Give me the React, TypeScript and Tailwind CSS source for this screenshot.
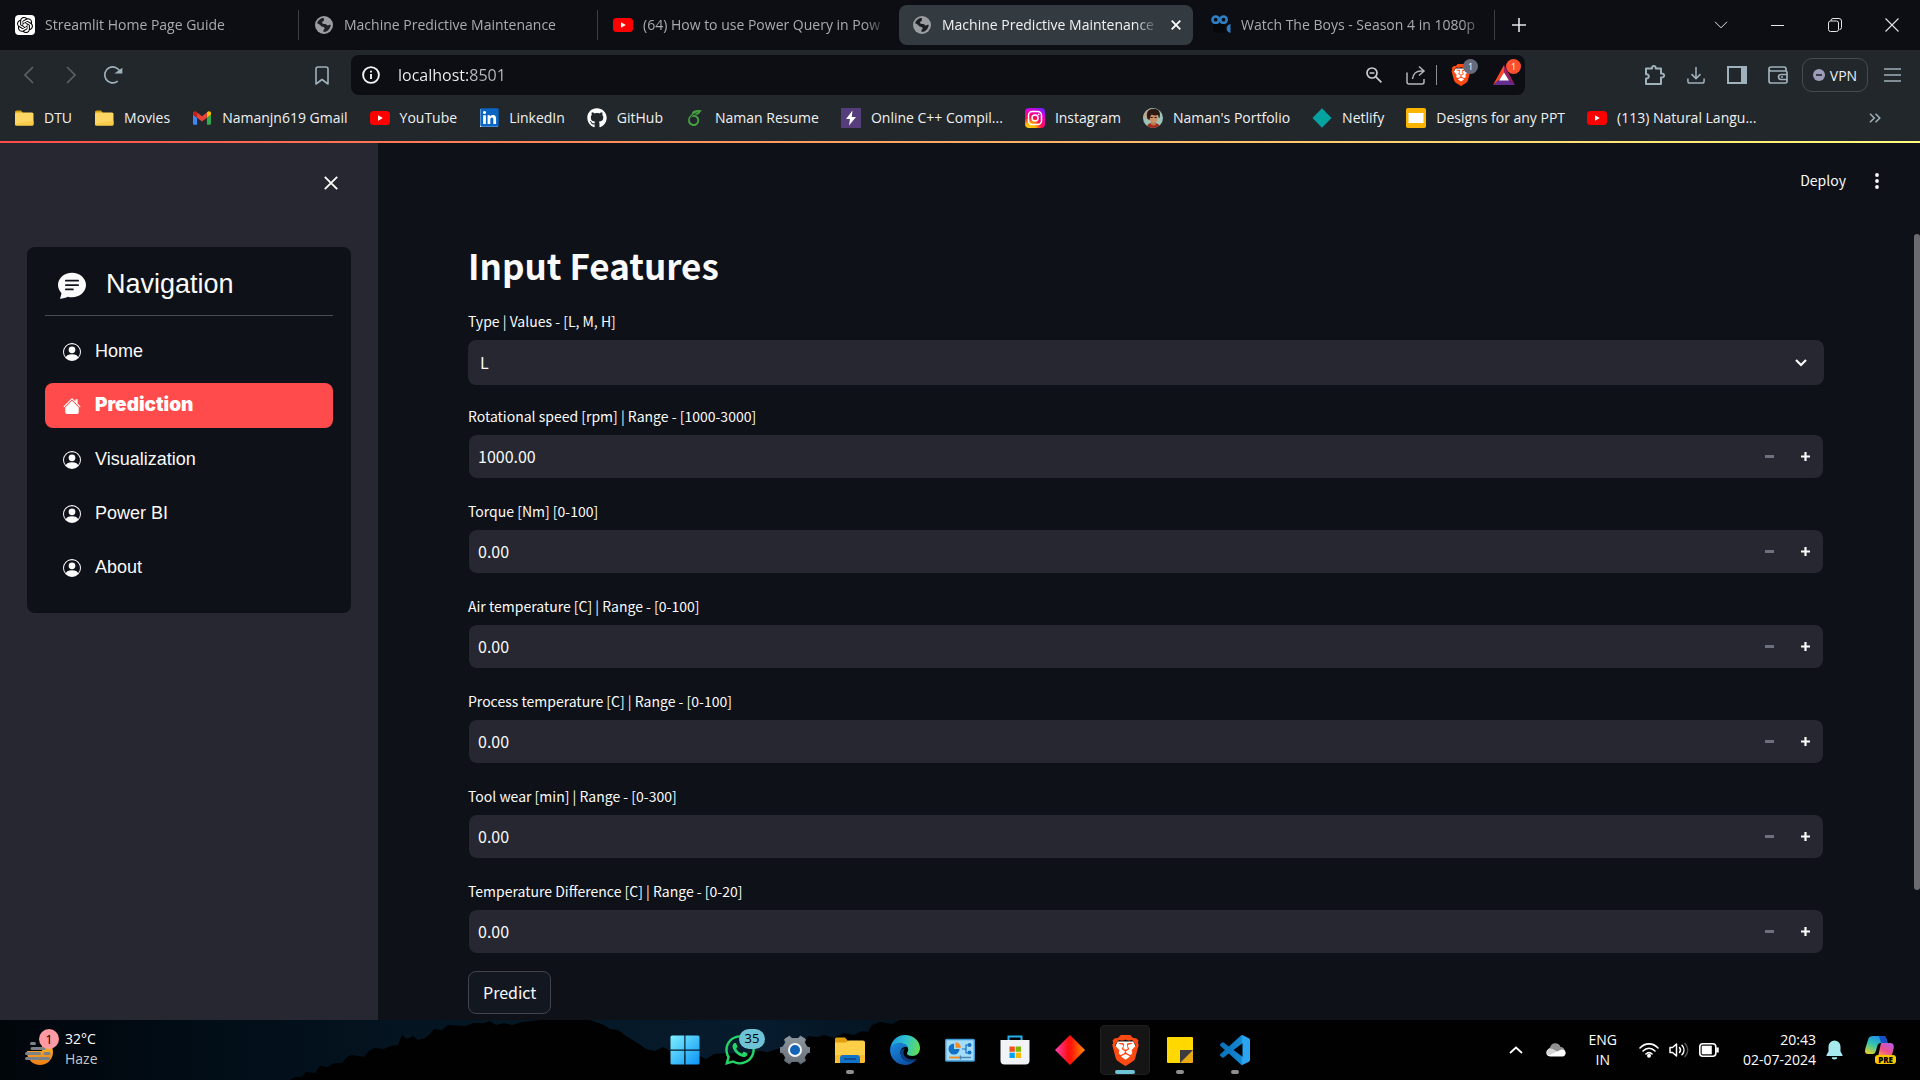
import React from "react";
import { BsChatTextFill, BsHouseFill, BsPersonCircle } from "react-icons/bs";
import { FaGithub, FaLinkedin, FaWhatsapp } from "react-icons/fa";
import { SiBrave, SiOpenai, SiOverleaf } from "react-icons/si";

type IconProps = { className?: string };

const Globe = ({ className = "size-[18px]" }: IconProps) => (
  <svg viewBox="0 0 18 18" className={className} aria-hidden="true">
    <circle cx="9" cy="9" r="9" fill="#9a9da2" />
    <path
      d="M2.2 7.2C3 4 6 1.900 9 2c-.8 1.200.6 1.800-.2 2.800C8 5.800 7 5.400 7 6.800c0 1 1.800 1.200 3.200 1.200 1.500 0 1.300 1.600 2.600 1.600 1.100 0 1.600-.9 2.900-.7-.1 3.600-3.300 7-7 7-.5-.9-.3-2.200.5-2.700.9-.7.4-1.900-.7-2.300-1.500-.5-2.200-.3-3.200-1.700-.7-1-2-1.300-3.100-2z"
      fill="#1c2024"
    />
    <path d="M11 2.500c2 .5 3.600 1.900 4.300 3.700-1.400.4-3 .2-3.400-.8-.4-.9-1.700-1.500-.9-2.900z" fill="#9a9da2" />
  </svg>
);

const YouTube = () => (
  <svg viewBox="0 0 20 14" className="h-[14px] w-5" aria-hidden="true">
    <rect width="20" height="14" rx="3.5" fill="#ff0000" />
    <path d="M8 4.200v5.600L12.800 7z" fill="#fff" />
  </svg>
);

const Folder = () => (
  <svg viewBox="0 0 20 16" className="h-4 w-5" aria-hidden="true">
    <path d="M1 2a1.500 1.500 0 0 1 1.500-1.500H7L9 3h9v3H1z" fill="#d9a010" />
    <rect x="1" y="2.500" width="18.500" height="13" rx="1.500" fill="#fdd663" />
    <path d="M1 14v0a1.500 1.500 0 0 0 1.500 1.500H18a1.500 1.500 0 0 0 1.500-1.500v-3z" fill="#f9cc48" />
  </svg>
);

const Gmail = () => (
  <svg viewBox="52 42 88 66" className="h-[14px] w-[18px]" aria-hidden="true">
    <path fill="#4285f4" d="M58 108h14V74L52 59v43c0 3.320 2.690 6 6 6" />
    <path fill="#34a853" d="M120 108h14c3.320 0 6-2.690 6-6V59l-20 15" />
    <path fill="#fbbc04" d="M120 48v26l20-15v-8c0-7.420-8.470-11.650-14.400-7.200" />
    <path fill="#ea4335" d="M72 74V48l24 18 24-18v26L96 92" />
    <path fill="#c5221f" d="M52 51v8l20 15V48l-5.600-4.200c-5.940-4.450-14.400-.22-14.400 7.200" />
  </svg>
);

const LinkedIn = () => (
  <span className="flex size-[18px] items-center justify-center bg-white">
    <FaLinkedin className="size-[21px] shrink-0 text-[#0a66c2]" />
  </span>
);

const Bolt = () => (
  <svg viewBox="0 0 20 20" className="size-5" aria-hidden="true">
    <rect width="20" height="20" fill="#563d7c" />
    <path d="M11.500 2.500 5 11h4l-1 6.500L15 9h-4.200z" fill="#fff" />
  </svg>
);

const Instagram = () => (
  <svg viewBox="0 0 20 20" className="size-5" aria-hidden="true">
    <defs>
      <radialGradient id="ig" cx="0.25" cy="1.050" r="1.150">
        <stop offset="0" stopColor="#ffd521" />
        <stop offset="0.25" stopColor="#ffb700" />
        <stop offset="0.5" stopColor="#ff0d4f" />
        <stop offset="0.8" stopColor="#e600c8" />
        <stop offset="1" stopColor="#7a1cff" />
      </radialGradient>
    </defs>
    <rect width="20" height="20" rx="4" fill="url(#ig)" />
    <rect x="3.500" y="3.500" width="13" height="13" rx="3.800" fill="none" stroke="#fff" strokeWidth="1.500" />
    <circle cx="10" cy="10" r="3" fill="none" stroke="#fff" strokeWidth="1.500" />
    <circle cx="13.700" cy="6.300" r="0.900" fill="#fff" />
  </svg>
);

const Avatar = () => (
  <svg viewBox="0 0 20 20" className="size-5" aria-hidden="true">
    <defs>
      <clipPath id="avatar-clip">
        <circle cx="10" cy="10" r="10" />
      </clipPath>
    </defs>
    <g clipPath="url(#avatar-clip)">
      <rect width="20" height="20" fill="#9cc4b8" />
      <path d="M0 0h9L4 11 0 10z" fill="#b9a893" />
      <path d="M4 20c0-4 2-5 6-5s7 1 7 5z" fill="#a52a1c" />
      <path d="M8 12h5v4.500c-1.500 1.500-4 1-5 0z" fill="#b97850" />
      <ellipse cx="10.500" cy="10" rx="4.300" ry="5" fill="#cf9066" />
      <path d="M4.500 11C2.500 4 5.500.6 11 .8c5.500.2 7 4.300 5.300 9.700-.9-1-.8-2.500-1.600-3.500-2 .8-4.500.5-6-.5-1.200 1.200-1.700 3-2.200 5.500z" fill="#2b1a14" />
      <path d="M7.500 9.500h2.200M11.500 9.500h2.200" stroke="#2b1a14" strokeWidth="1.200" />
    </g>
  </svg>
);

const Netlify = () => (
  <svg viewBox="0 0 20 20" className="size-5" aria-hidden="true">
    <path d="M10 .2 19.500 10 10 19.800.5 10z" fill="#05a3a0" />
  </svg>
);

const Slides = () => (
  <svg viewBox="0 0 20 20" className="size-5" aria-hidden="true">
    <rect width="20" height="20" rx="1.800" fill="#fbb400" />
    <rect x="2.500" y="5" width="15" height="10" fill="#fff" />
  </svg>
);

const MovieReel = () => (
  <svg viewBox="0 0 20 20" className="size-5" aria-hidden="true">
    <g fill="none" stroke="#2f7fc4" strokeWidth="2.600">
      <circle cx="4.700" cy="4.700" r="3.200" />
      <circle cx="12.500" cy="4.700" r="3.200" />
    </g>
    <rect x="2" y="9" width="12" height="8.500" rx="1.500" fill="#07080b" />
    <path d="M19.500 9v9c-2.600-.8-3.800-2.500-3.800-4.500s1.200-3.700 3.800-4.500z" fill="#2f7fc4" />
  </svg>
);

const tabs = [
  {
    title: "Streamlit Home Page Guide",
    icon: (
      <span className="flex size-5 items-center justify-center rounded-[4px] bg-white">
        <SiOpenai className="size-4 text-black" />
      </span>
    ),
    line: true,
  },
  { title: "Machine Predictive Maintenance", icon: <Globe />, line: true },
  { title: "(64) How to use Power Query in Pow", icon: <YouTube />, line: false },
  { title: "Machine Predictive Maintenance", icon: <Globe />, active: true, line: false },
  { title: "Watch The Boys - Season 4 in 1080p", icon: <MovieReel />, line: true },
];

function TabStrip() {
  return (
    <div className="flex h-[50px] bg-[#0d0e13]">
      <div className="flex min-w-0" role="tablist">
        {tabs.map((t, i) => (
          <div
            key={i}
            className={`flex w-[299px] items-center py-[5px] pl-[2px] pr-[3px] ${t.line ? "bg-[linear-gradient(#3a3d42,#3a3d42)] bg-[length:1px_30px] bg-right bg-no-repeat" : ""}`}
          >
            <div
              className={`flex h-10 min-w-0 flex-1 items-center rounded-lg pl-[13px] ${t.active ? "bg-[#343b40] pr-2" : "pr-[6px]"}`}
            >
              <button
                role="tab"
                aria-selected={!!t.active}
                className={`flex min-w-0 flex-1 items-center gap-[10px] text-left text-[14px] ${t.active ? "text-[#f1f2f3]" : "text-[#a9abaf]"}`}
              >
                <span className="flex w-5 shrink-0 items-center justify-center">{t.icon}</span>
                <span className="min-w-0 flex-1 overflow-hidden whitespace-nowrap pb-[2px] [mask-image:linear-gradient(to_right,#000_calc(100%-24px),transparent)]">
                  {t.title}
                </span>
              </button>
              {t.active && (
                <button aria-label="Close tab" className="ml-2 flex w-[18px] shrink-0 items-center justify-center text-white">
                  <svg viewBox="0 0 10 10" className="size-[10px]" stroke="currentColor" strokeWidth="1.800">
                    <path d="m.7.7 8.600 8.600M9.300.7.7 9.300" />
                  </svg>
                </button>
              )}
            </div>
          </div>
        ))}
      </div>
      <button aria-label="New tab" className="flex w-12 items-center justify-center text-[#e4e5e7]">
        <svg viewBox="0 0 14 14" className="size-[14px]" stroke="currentColor" strokeWidth="1.600">
          <path d="M7 0v14M0 7h14" />
        </svg>
      </button>
      <div className="ml-auto flex text-[#e4e5e7]">
        <button aria-label="Search tabs" className="flex w-[57px] items-center justify-center">
          <svg viewBox="0 0 14 8" className="h-2 w-[14px]" fill="none" stroke="currentColor">
            <path d="m1 .8 6 6 6-6" />
          </svg>
        </button>
        <button aria-label="Minimize" className="flex w-[57px] items-center justify-center">
          <span className="h-px w-[13px] bg-current" />
        </button>
        <button aria-label="Restore" className="flex w-[57px] items-center justify-center">
          <svg viewBox="0 0 14 14" className="size-[14px]" fill="none" stroke="currentColor">
            <rect x="0.500" y="3" width="10" height="10.500" rx="2" />
            <path d="M3 3V2.500A2 2 0 0 1 5 .5h6a2.500 2.500 0 0 1 2.500 2.500v6.500a2 2 0 0 1-2 2" />
          </svg>
        </button>
        <button aria-label="Close window" className="flex w-[57px] items-center justify-center">
          <svg viewBox="0 0 14 14" className="size-[14px]" stroke="currentColor" strokeWidth="1.100">
            <path d="m.5.5 13 13m0-13-13 13" />
          </svg>
        </button>
      </div>
    </div>
  );
}

function BraveMark({ className }: IconProps) {
  return (
    <span className={`relative flex items-center justify-center ${className}`}>
      <svg viewBox="0 0 24 24" className="absolute size-full" aria-hidden="true">
        <path d="M6 5h12l2 4-3 9-5 4-5-4-3-9z" fill="#fff" />
      </svg>
      <SiBrave className="relative size-full text-[#ff4a13]" />
    </span>
  );
}

function Toolbar() {
  const icon = "size-5 overflow-visible fill-none stroke-[#9fb1bb] stroke-2";
  const btn = "flex size-6 items-center justify-center";
  return (
    <div className="flex h-[50px] items-center">
      <div className="flex w-[351px] shrink-0 items-center pl-[17px]">
        <button aria-label="Back" className={btn}>
          <svg viewBox="0 0 10 18" className="h-[18px] w-[10px]" fill="none" stroke="#596167" strokeWidth="1.700">
            <path d="M9 1 1 9l8 8" />
          </svg>
        </button>
        <button aria-label="Forward" className={`${btn} ml-[18px]`}>
          <svg viewBox="0 0 10 18" className="h-[18px] w-[10px]" fill="none" stroke="#596167" strokeWidth="1.700">
            <path d="m1 1 8 8-8 8" />
          </svg>
        </button>
        <button aria-label="Reload" className={`${btn} ml-[18px]`}>
          <svg viewBox="0 0 20 20" className="size-5" fill="none" stroke="#9fb1bb" strokeWidth="1.700">
            <path d="M14.700 16.200A8 8 0 1 1 17.200 7" />
            <path d="M14 7.700h4.500V4.500z" fill="#9fb1bb" />
          </svg>
        </button>
        <button aria-label="Bookmark this page" className={`${btn} ml-auto mr-[17px]`}>
          <svg viewBox="0 0 14 19" className="h-[19px] w-[14px]" fill="none" stroke="#9fb1bb" strokeWidth="1.600">
            <path d="M1 18V3a2 2 0 0 1 2-2h8a2 2 0 0 1 2 2v15l-6-4.500z" strokeLinejoin="round" />
          </svg>
        </button>
      </div>
      <div className="flex h-10 min-w-0 flex-1 items-center rounded-lg bg-[#0d0e13] pl-[11px] pr-[9px]">
        <svg viewBox="0 0 18 18" className="size-[18px] shrink-0" fill="none" stroke="#f3f4f5" strokeWidth="1.900" aria-hidden="true">
          <circle cx="9" cy="9" r="7.900" />
          <path d="M9 8v5M9 4.700v1.900" />
        </svg>
        <div className="ml-[18px] min-w-0 flex-1">
          <input
            aria-label="Address"
            defaultValue="localhost:8501"
            className="w-full bg-gradient-to-r from-[#f3f4f5] from-[72px] to-[#b9bbbf] to-[73px] bg-clip-text text-[16px] text-transparent outline-none"
          />
        </div>
        <button aria-label="Zoom" className={btn}>
          <svg viewBox="0 0 16 16" className="size-4" fill="none" stroke="#c9ccd0" strokeWidth="1.700">
            <circle cx="6" cy="6" r="5" />
            <path d="m9.700 9.700 5.700 5.700M3.600 6h4.800" />
          </svg>
        </button>
        <button aria-label="Share" className={`${btn} ml-[18px]`}>
          <svg viewBox="0 0 20 20" className="size-5" fill="none" stroke="#b4b7bc" strokeWidth="1.500">
            <path d="M1 7.500V17a2 2 0 0 0 2 2h13a2 2 0 0 0 2-2v-3M13 1.500l5 4.500-5 4.500M18 6h-3c-4.500 0-8 3-8.500 8" />
          </svg>
        </button>
        <span className="ml-2 h-5 w-px bg-[#8a8d92]" />
        <button aria-label="Brave Shields, 1 blocked" className="relative ml-3 flex size-6 items-center justify-center">
          <BraveMark className="size-[22px]" />
          <span className="absolute -right-[5px] -top-[4px] flex size-[15px] items-center justify-center rounded-full bg-[#656a7c] text-[9px] text-white">
            1
          </span>
        </button>
        <button aria-label="Brave Rewards, 1 notification" className="relative ml-[19px] flex size-6 items-center justify-center">
          <svg viewBox="0 0 22 20" className="h-5 w-[22px]" aria-hidden="true">
            <path d="M11 0v8l-5 7-6 5z" fill="#ff4724" />
            <path d="M11 0v8l5 7 6 5z" fill="#9e1f63" />
            <path d="M0 20h22l-6-5H6z" fill="#662d91" />
            <path d="M11 7.500 6 15.500h10z" fill="#fff" />
          </svg>
          <span className="absolute -right-[5px] -top-[4px] flex size-[15px] items-center justify-center rounded-full bg-[#ff4f2e] text-[9px] text-white">
            1
          </span>
        </button>
      </div>
      <div className="flex w-[395px] shrink-0 items-center justify-end gap-3 pr-4">
        <div className="flex gap-[17px]">
          <button aria-label="Extensions" className={btn}>
            <svg viewBox="0 0 20 20" className={icon}>
              <path d="M1 3.500h6c-.6-3.500 4.300-3.500 3.700 0H16v5c4.200-.6 4.200 4.600 0 4V19H1v-5.500c3.700.4 3.700-4.600 0-4.200z" strokeLinejoin="round" />
            </svg>
          </button>
          <button aria-label="Downloads" className={btn}>
            <svg viewBox="0 0 20 20" className="size-[18px] fill-none stroke-[#9fb1bb] stroke-[1.700px]">
              <path d="M10 1v13m-5-5 5 5 5-5M1 14v3a2 2 0 0 0 2 2h14a2 2 0 0 0 2-2v-3" />
            </svg>
          </button>
          <button aria-label="Side panel" className={btn}>
            <svg viewBox="0 0 20 18" className="h-[18px] w-5 fill-none stroke-[#9fb1bb] stroke-2">
              <rect x="1" y="1" width="18" height="16" />
              <path d="M16.500 1v16" className="stroke-[5px]" />
            </svg>
          </button>
          <button aria-label="Wallet" className={btn}>
            <svg viewBox="0 0 20 18" className="h-[18px] w-5 fill-none stroke-[#9fb1bb] stroke-[1.700px]">
              <path d="M18 5V3a2 2 0 0 0-2-2H3a2 2 0 0 0 0 4h14.500a1.500 1.500 0 0 1 1.500 1.500v9a1.500 1.500 0 0 1-1.500 1.500H3a2 2 0 0 1-2-2V3M19 8.500h-6a2.500 2.500 0 0 0 0 5h6M13 11h2" />
            </svg>
          </button>
        </div>
        <button className="flex h-[34px] w-[66px] items-center justify-center gap-[5px] rounded-[10px] border border-[#454c51] text-[14px] text-[#eef0f1]">
          <svg viewBox="0 0 12 12" className="size-3" aria-hidden="true">
            <circle cx="6" cy="6" r="6" fill="#9c9cb8" />
            <path d="M3 6h6" stroke="#22272b" strokeWidth="1.600" />
          </svg>
          VPN
        </button>
        <button aria-label="Menu" className={btn}>
          <svg viewBox="0 0 17 14" className="h-[14px] w-[17px]" stroke="#9fb1bb" strokeWidth="1.600">
            <path d="M0 1h17M0 7h17M0 13h17" />
          </svg>
        </button>
      </div>
    </div>
  );
}

const bookmarks = [
  { label: "DTU", icon: <Folder /> },
  { label: "Movies", icon: <Folder /> },
  { label: "Namanjn619 Gmail", icon: <Gmail /> },
  { label: "YouTube", icon: <YouTube /> },
  { label: "LinkedIn", icon: <LinkedIn /> },
  { label: "GitHub", icon: <FaGithub className="size-5 text-white" /> },
  { label: "Naman Resume", icon: <SiOverleaf className="size-4 text-[#47a141]" /> },
  { label: "Online C++ Compil...", icon: <Bolt /> },
  { label: "Instagram", icon: <Instagram /> },
  { label: "Naman's Portfolio", icon: <Avatar /> },
  { label: "Netlify", icon: <Netlify /> },
  { label: "Designs for any PPT", icon: <Slides /> },
  { label: "(113) Natural Langu...", icon: <YouTube /> },
];

function Bookmarks() {
  return (
    <nav aria-label="Bookmarks" className="flex h-[41px] items-center gap-[22px] pb-[6px] pl-[14px] pr-[39px] text-[14px] text-[#f0f1f2]">
      {bookmarks.map((b) => (
        <a key={b.label} href="#" className="flex shrink-0 items-center gap-[10px] whitespace-nowrap">
          <span className="flex w-5 items-center justify-center">{b.icon}</span>
          {b.label}
        </a>
      ))}
      <button aria-label="More bookmarks" className="ml-auto flex items-center">
        <svg viewBox="0 0 12 10" className="h-[10px] w-3" fill="none" stroke="#9fb1bb" strokeWidth="1.500">
          <path d="m1 .7 4.300 4.300L1 9.300M6.500.7 10.800 5 6.500 9.300" />
        </svg>
      </button>
    </nav>
  );
}

const links = ["Home", "Prediction", "Visualization", "Power BI", "About"];

function Sidebar() {
  return (
    <aside className="w-[378px] shrink-0 bg-[#262730] px-[27px] pt-8 font-['Liberation_Sans',Arial,sans-serif] text-[#fafafa]">
      <div className="flex h-[72px] items-start justify-end pr-3">
        <button aria-label="Close sidebar" className="p-[1px]">
          <svg viewBox="0 0 14 14" className="size-[14px]" stroke="currentColor" strokeWidth="1.900">
            <path d="m.8.8 12.400 12.400M13.200.8.8 13.200" />
          </svg>
        </button>
      </div>
      <nav aria-label="Navigation" className="rounded-lg bg-[#0e1117] px-[18px] pb-[23px]">
        <h2 className="flex h-[69px] items-center gap-5 border-b border-[#4a4c52] pl-[13px] pt-[7px] text-[27px]">
          <BsChatTextFill className="size-7" />
          Navigation
        </h2>
        <ul className="mt-[13px] flex flex-col gap-[9px]">
          {links.map((l) => {
            const active = l === "Prediction";
            const Icon = active ? BsHouseFill : BsPersonCircle;
            return (
              <li key={l}>
                <a
                  href="#"
                  aria-current={active ? "page" : undefined}
                  className={`flex h-[45px] items-center gap-[14px] rounded-lg pl-[18px] ${active ? "bg-[#ff4b4b] font-['Inter',sans-serif] text-[19px] font-black text-white" : "text-[18px]"}`}
                >
                  <Icon className="size-[18px]" />
                  {l}
                </a>
              </li>
            );
          })}
        </ul>
      </nav>
    </aside>
  );
}

const fields = [
  { id: "speed", label: "Rotational speed [rpm] | Range - [1000-3000]", value: "1000.00" },
  { id: "torque", label: "Torque [Nm] [0-100]", value: "0.00" },
  { id: "air", label: "Air temperature [C] | Range - [0-100]", value: "0.00" },
  { id: "process", label: "Process temperature [C] | Range - [0-100]", value: "0.00" },
  { id: "wear", label: "Tool wear [min] | Range - [0-300]", value: "0.00" },
  { id: "diff", label: "Temperature Difference [C] | Range - [0-20]", value: "0.00" },
];

function NumberField({ id, label, value }: { id: string; label: string; value: string }) {
  return (
    <div>
      <label htmlFor={id} className="block h-[29px] text-[14px] leading-5">
        {label}
      </label>
      <div className="mx-px flex h-[43px] items-center rounded-lg bg-[#262730]">
        <input id={id} defaultValue={value} inputMode="decimal" className="h-full min-w-0 flex-1 bg-transparent pb-[2px] pl-[9px] text-[16px] outline-none" />
        <button aria-label={`Decrease ${label}`} className="flex h-full w-9 items-center justify-center text-[#6b6f80]">
          <span className="h-[3px] w-[9px] bg-current" />
        </button>
        <button aria-label={`Increase ${label}`} className="flex h-full w-9 items-center justify-center">
          <svg viewBox="0 0 9 9" className="size-[9px]" stroke="currentColor" strokeWidth="2.200">
            <path d="M4.500 0v9M0 4.500h9" />
          </svg>
        </button>
      </div>
    </div>
  );
}

function Main() {
  return (
    <main className="flex min-w-0 flex-1 bg-[#0e1117] font-['Noto_Sans_CJK_SC',sans-serif] text-[#fafafa]">
      <div className="flex min-w-0 flex-1 flex-col">
        <header className="flex h-[76px] shrink-0 items-center justify-end gap-6 pr-[30px] text-[14px]">
          <button className="pb-[2px]">Deploy</button>
          <button aria-label="More options" className="flex w-[14px] justify-center">
            <svg viewBox="0 0 4 16" className="h-4 w-1" fill="currentColor">
              <circle cx="2" cy="2" r="1.900" />
              <circle cx="2" cy="8" r="1.900" />
              <circle cx="2" cy="14" r="1.900" />
            </svg>
          </button>
        </header>
        <form className="px-[90px] pt-[18px]" onSubmit={(e) => e.preventDefault()}>
          <h1 className="text-[35px] font-bold leading-[56px]">Input Features</h1>
          <div className="mt-[18px]">
            <label htmlFor="type" className="block h-[29px] text-[14px] leading-5">
              Type | Values - [L, M, H]
            </label>
            <div className="relative">
              <select id="type" defaultValue="L" className="h-[45px] w-full appearance-none rounded-lg bg-[#262730] pb-[2px] pl-3 text-[16px] outline-none">
                <option>L</option>
                <option>M</option>
                <option>H</option>
              </select>
              <svg viewBox="0 0 12 8" className="pointer-events-none absolute right-[17px] top-[19px] h-2 w-3" fill="none" stroke="currentColor" strokeWidth="2.200" aria-hidden="true">
                <path d="m1 1 5 5 5-5" />
              </svg>
            </div>
          </div>
          <div className="mt-[21px] flex flex-col gap-[23px]">
            {fields.map((f) => (
              <NumberField key={f.id} {...f} />
            ))}
          </div>
          <button type="submit" className="mt-[18px] h-[43px] rounded-lg border border-[#41444c] bg-[#131720] px-[14px] pb-[2px] text-[16px]">
            Predict
          </button>
        </form>
      </div>
      <div className="w-[6px] shrink-0 pt-[91px]">
        <div className="h-[656px] rounded-full bg-[#6b6b70]" />
      </div>
    </main>
  );
}

const WindowsLogo = () => (
  <svg viewBox="0 0 30 30" className="size-[30px]">
    <defs>
      <linearGradient id="win" x1="0" y1="0" x2="1" y2="1">
        <stop offset="0" stopColor="#7ff0ff" />
        <stop offset="1" stopColor="#0a93f5" />
      </linearGradient>
    </defs>
    <path d="M2 .5h12.300v14H.5V2A1.500 1.500 0 0 1 2 .5zm13.500 0H28A1.500 1.500 0 0 1 29.500 2v12.500h-14zM.5 15.700h13.800v13.800H2A1.500 1.500 0 0 1 .5 28zm15 0h14V28a1.500 1.500 0 0 1-1.500 1.500H15.500z" fill="url(#win)" />
  </svg>
);

const WhatsApp = () => (
  <span className="relative flex">
    <FaWhatsapp className="size-[34px] text-[#25d366]" />
    <span className="absolute -top-[4px] left-[16px] flex h-5 w-[26px] items-center justify-center rounded-full bg-[#6fc3d6] text-[13px] text-black">
      35
    </span>
  </span>
);

const Gear = () => (
  <svg viewBox="0 0 30 30" className="size-[30px]">
    <defs>
      <linearGradient id="gear" x1="0" y1="0" x2="0" y2="1">
        <stop offset="0" stopColor="#8e969e" />
        <stop offset="1" stopColor="#67707a" />
      </linearGradient>
    </defs>
    <path
      d="M9.500 1.200 12 3.600h6l2.500-2.400 4.800 3-.8 3.600 2.600 4.200 3.400 1v4l-3.400 1-2.600 4.200.8 3.600-4.800 3-2.500-2.400h-6l-2.500 2.400-4.800-3 .8-3.600L2.900 18-.5 17v-4l3.400-1 2.600-4.200-.8-3.600z"
      fill="url(#gear)"
      stroke="url(#gear)"
      strokeLinejoin="round"
    />
    <circle cx="15" cy="15" r="6" fill="#1262b8" stroke="#f4f6f8" strokeWidth="2" />
  </svg>
);

const Explorer = () => (
  <svg viewBox="0 0 30 28" className="h-7 w-[30px]">
    <path d="M0 3a1.500 1.500 0 0 1 1.500-1.500H10L13 5h15v6H0z" fill="#e2a00e" />
    <path d="M0 6.500h11L13.500 4.500H28a2 2 0 0 1 2 2V25a2 2 0 0 1-2 2H0z" fill="#ffcf48" />
    <path d="M0 19h30v6a2 2 0 0 1-2 2H2a2 2 0 0 1-2-2z" fill="#fbbd2e" />
    <path d="M5 27v-5a3 3 0 0 1 3-3h14a3 3 0 0 1 3 3v5z" fill="#1273c9" />
    <path d="M9 23h12" stroke="#0a4f93" strokeWidth="2" />
  </svg>
);

const Edge = () => (
  <svg viewBox="0 0 30 30" className="size-[30px]">
    <defs>
      <linearGradient id="edge-top" x1="0" y1="0.300" x2="1" y2="0.500">
        <stop offset="0" stopColor="#1e9be0" />
        <stop offset="0.5" stopColor="#2fc2d0" />
        <stop offset="1" stopColor="#62dd55" />
      </linearGradient>
      <linearGradient id="edge-low" x1="0" y1="0" x2="0.800" y2="1">
        <stop offset="0" stopColor="#1a8be0" />
        <stop offset="1" stopColor="#0c4a9c" />
      </linearGradient>
    </defs>
    <path d="M.3 13.500C1 6 7 0 15 0c8.500 0 15 6 15 13 0 5-3.500 8-7.500 8-3.500 0-5.500-1.300-5.500-2.500 0-1 1.200-1.600 1.200-4 0-3-3-6-7.700-6-5 0-8.500 2.500-10.200 5z" fill="url(#edge-top)" />
    <path d="M.1 14.500C.5 10 5 8.300 9.500 8.300c4.500 0 7.500 1.700 8.500 4.200-5-1.500-7.500 1.500-7.500 5 0 5 4 9 9 9 2.500 0 5-.8 6.800-2C23.500 28 19.500 30 15 30 6.500 30-.4 23 .1 14.500z" fill="url(#edge-low)" />
    <path d="M10.500 17.500c0 5 4 9 9 9 2.500 0 5-.8 6.800-2 .5-.5.200-1-.3-.8-6.500 2.300-12-1-12.500-5.700-.1-1.800.5-3.500 1.600-4.500-2.700 0-4.600 1.800-4.600 4z" fill="#0b3f86" />
  </svg>
);

const ControlPanel = () => (
  <svg viewBox="0 0 30 28" className="h-7 w-[30px]">
    <rect x="0.700" y="3.500" width="28.600" height="21.500" rx="1" fill="#a5dcf8" stroke="#3f9ad6" strokeWidth="1.400" />
    <path d="M9 7.500a5.500 5.500 0 1 0 5.500 5.500H9z" fill="#1171c4" />
    <path d="M10.500 6.200v5.500h5.300a5.400 5.400 0 0 0-5.300-5.500z" fill="#f58b1f" />
    <path d="M17 13h4m0 0V9h2m-2 4v4h2" fill="none" stroke="#1171c4" strokeWidth="1.200" />
    <circle cx="24.500" cy="9" r="2" fill="#1171c4" />
    <circle cx="24.500" cy="16.500" r="2" fill="#1171c4" />
    <path d="M4 21.500h11" stroke="#f58b1f" strokeWidth="1.800" />
    <path d="M16 21.500h10M15.500 19.500v4" stroke="#4b87b5" strokeWidth="1.500" />
  </svg>
);

const Store = () => (
  <svg viewBox="0 0 30 30" className="size-[30px]">
    <path d="M8.500 6V1.500h13V6" fill="none" stroke="#27b0ec" strokeWidth="2" />
    <path d="M.5 5h29v20.500a4 4 0 0 1-4 4h-21a4 4 0 0 1-4-4z" fill="#f1f3f5" />
    <path d="M9.500 11.500h5.300v5.300H9.500z" fill="#f25022" />
    <path d="M15.700 11.500H21v5.300h-5.300z" fill="#7fba00" />
    <path d="M9.500 17.700h5.300V23H9.500z" fill="#00a4ef" />
    <path d="M15.700 17.700H21V23h-5.300z" fill="#ffb900" />
  </svg>
);

const Diamond = () => (
  <svg viewBox="0 0 30 30" className="size-[30px]">
    <defs>
      <linearGradient id="diamond" x1="0" x2="1" y1="0" y2="0">
        <stop offset="0" stopColor="#ff3fb4" />
        <stop offset="0.450" stopColor="#ff1010" />
        <stop offset="0.550" stopColor="#ff1a08" />
        <stop offset="1" stopColor="#ff9000" />
      </linearGradient>
    </defs>
    <path d="M15 0 30 15 15 30 0 15z" fill="url(#diamond)" />
  </svg>
);

const Notes = () => (
  <svg viewBox="0 0 26 26" className="size-[26px]">
    <path d="M1 0h24a1 1 0 0 1 1 1v12L14 26H1a1 1 0 0 1-1-1V1a1 1 0 0 1 1-1z" fill="#ffd800" />
    <path d="M13 13h13v12a1 1 0 0 1-1 1H13z" fill="#e8a913" />
    <path d="M13 13h13L13 26z" fill="#3c3c3f" />
  </svg>
);

const VsCode = () => (
  <svg viewBox="0 0 24 24" className="size-[30px]">
    <defs>
      <linearGradient id="vs" x1="0" x2="1" y1="0" y2="0">
        <stop offset="0" stopColor="#0a70b8" />
        <stop offset="0.7" stopColor="#1487d2" />
        <stop offset="0.760" stopColor="#2ba5f2" />
      </linearGradient>
    </defs>
    <path
      fill="url(#vs)"
      d="M23.150 2.587L18.210.210a1.494 1.494 0 0 0-1.705.290l-9.460 8.630-4.120-3.128a.999.999 0 0 0-1.276.057L.327 7.261A1 1 0 0 0 .326 8.740L3.899 12 .326 15.260a1 1 0 0 0 .001 1.479L1.650 17.940a.999.999 0 0 0 1.276.057l4.120-3.128 9.460 8.630a1.492 1.492 0 0 0 1.704.290l4.942-2.377A1.500 1.500 0 0 0 24 20.060V3.939a1.500 1.500 0 0 0-.850-1.352zm-5.146 14.861L10.826 12l7.178-5.448v10.896z"
    />
  </svg>
);

const apps = [
  { name: "Start", icon: <WindowsLogo /> },
  { name: "WhatsApp", icon: <WhatsApp /> },
  { name: "Settings", icon: <Gear /> },
  { name: "File Explorer", icon: <Explorer />, state: "open" },
  { name: "Microsoft Edge", icon: <Edge /> },
  { name: "Control Panel", icon: <ControlPanel /> },
  { name: "Microsoft Store", icon: <Store /> },
  { name: "Power Automate", icon: <Diamond /> },
  { name: "Brave", icon: <BraveMark className="size-[31px]" />, state: "active" },
  { name: "Sticky Notes", icon: <Notes />, state: "open" },
  { name: "Visual Studio Code", icon: <VsCode />, state: "open" },
];

const Wallpaper = () => (
  <svg viewBox="0 0 1920 60" preserveAspectRatio="none" className="absolute inset-0 size-full" aria-hidden="true">
    <defs>
      <linearGradient id="sky" x1="0" x2="1920" y1="0" y2="0" gradientUnits="userSpaceOnUse">
        <stop offset="0" stopColor="#01060b" />
        <stop offset="0.120" stopColor="#020e18" />
        <stop offset="0.250" stopColor="#051724" />
        <stop offset="0.400" stopColor="#061b2d" />
        <stop offset="0.460" stopColor="#041421" />
      </linearGradient>
    </defs>
    <rect width="1920" height="60" fill="url(#sky)" />
    <path
      d="M290 60 295 57 302 57 306 52 315 53 320 46 328 47 334 43 342 43 347 37 352 35 364 37 369 31 374 28 384 29 390 26 398 25 402 15 407 19 413 16 418 20 425 18 430 14 434 9 442 10 448 5 465 6 474 3 485 3 490 1 496 5 504 3 512 5 522 2 532 1 540 0 590 0 604 5 610 9 618 10 626 16 636 22 646 29 655 31 663 27 670 31 684 34 692 38 700 36 706 39 714 34 728 33 745 34 758 31 768 32 780 28 790 29 796 24 804 25 808 16 818 17 824 15 834 18 844 13 854 15 862 11 868 12 872 5 880 2 892 4 900 0H1920V60z"
      fill="#010102"
    />
  </svg>
);

const Weather = () => (
  <span className="relative flex h-9 w-[30px] items-end">
    <svg viewBox="0 0 30 26" className="h-[26px] w-[30px]">
      <defs>
        <linearGradient id="sun" x1="0" y1="0" x2="0" y2="1">
          <stop offset="0" stopColor="#f7c530" />
          <stop offset="1" stopColor="#ee7d18" />
        </linearGradient>
      </defs>
      <circle cx="15" cy="11" r="13" fill="url(#sun)" />
      <path d="M0 0h17v10H0z" fill="#02080e" />
      <path d="M6.500 2.500h3M7 7.500h12M1.500 12.500h13M20 12.500h4M1.500 17.500h22" stroke="#7c8287" strokeWidth="3" strokeLinecap="round" />
    </svg>
    <span className="absolute -right-[4px] -top-[2px] flex size-5 items-center justify-center rounded-full bg-[#ff99a4] text-[13px] text-black">
      1
    </span>
  </span>
);

function Taskbar() {
  return (
    <footer className="relative h-[60px] shrink-0 bg-black text-white">
      <Wallpaper />
      <div className="relative grid h-full grid-cols-[1fr_auto_1fr] items-center">
        <button className="flex items-center gap-[10px] pb-[2px] pl-[25px] text-left text-[14px] leading-5">
          <Weather />
          <span>
            <span className="block">32°C</span>
            <span className="block text-[#c4c7ca]">Haze</span>
          </span>
        </button>
        <div className="flex h-full items-center">
          {apps.map((a) => (
            <button key={a.name} aria-label={a.name} className="flex h-full w-[55px] items-center justify-center">
              <span
                className={`relative flex size-[50px] items-center justify-center rounded-[5px] ${a.state === "active" ? "bg-[#151515] ring-1 ring-inset ring-[#202020]" : ""}`}
              >
                {a.icon}
                {a.state === "open" && <span className="absolute bottom-[1px] h-1 w-2 rounded-full bg-[#8d8f91]" />}
                {a.state === "active" && <span className="absolute bottom-[1px] h-1 w-5 rounded-full bg-[#6fc3d6]" />}
              </span>
            </button>
          ))}
        </div>
        <div className="flex items-center justify-end pr-[25px] text-[14px] leading-5">
          <button aria-label="Show hidden icons">
            <svg viewBox="0 0 14 8" className="h-2 w-[14px]" fill="none" stroke="currentColor" strokeWidth="1.800">
              <path d="m1 7 6-5.500L13 7" />
            </svg>
          </button>
          <button aria-label="OneDrive" className="ml-[23px]">
            <svg viewBox="0 0 20 14" className="h-[14px] w-5">
              <path d="M4 12a4 4 0 0 1 0-7.500A5.500 5.500 0 0 1 14.500 4 4.500 4.500 0 0 1 19 9z" fill="#8f9193" />
              <path d="M4 13.500a3.900 3.900 0 0 1-1-7.600c2-.6 3.500 0 5 1l3 1.600 4-1.800a3.500 3.500 0 1 1 1.300 6.800z" fill="#fff" />
              <path d="M3 5.900c2-.6 3.500 0 5 1l3 1.600-8 3.800C.5 11 .3 7 3 5.900z" fill="#d4d5d6" />
            </svg>
          </button>
          <button className="ml-[23px] text-center">
            <span className="block">ENG</span>
            <span className="block">IN</span>
          </button>
          <button aria-label="Network, volume and battery" className="ml-[22px] flex items-center gap-[10px]">
            <svg viewBox="0 0 20 16" className="h-4 w-5" fill="none" stroke="#fff" strokeWidth="1.600" strokeLinecap="round">
              <path d="M1 6c5-5.500 13-5.500 18 0M4 9c3.500-3.700 8.500-3.700 12 0M7 12c1.800-1.900 4.200-1.900 6 0" />
              <circle cx="10" cy="13.800" r="1.200" fill="#fff" />
            </svg>
            <svg viewBox="0 0 20 16" className="h-4 w-5" fill="none" stroke="#fff" strokeWidth="1.500" strokeLinecap="round">
              <path d="M1 5.500h2.500L7.500 2v12l-4-3.500H1z" strokeLinejoin="round" />
              <path d="M10.500 5.500c1.200 1.500 1.200 3.500 0 5M13 3.200c2.600 2.800 2.600 6.800 0 9.600" />
              <path d="M16 1.500c3.600 4 3.600 9 0 13" stroke="#555" />
            </svg>
            <svg viewBox="0 0 20 14" className="h-[14px] w-5" fill="none" stroke="#fff" strokeWidth="1.600">
              <rect x="0.800" y="0.800" width="16" height="12.400" rx="3" />
              <path d="M18.500 4.500v5" strokeWidth="2.500" />
              <rect x="3.500" y="3.500" width="8.500" height="7" fill="#fff" />
            </svg>
          </button>
          <button className="ml-5 min-w-[77px] text-right">
            <span className="block">20:43</span>
            <span className="block">02-07-2024</span>
          </button>
          <button aria-label="Notifications" className="ml-[10px]">
            <svg viewBox="0 0 17 20" className="h-5 w-[17px]" fill="#a6eaf0">
              <path d="M8.500.5A6 6 0 0 1 14.500 6.500v5l2 3.500v1H.5v-1l2-3.500v-5a6 6 0 0 1 6-6zM5.800 17.300h5.400a2.700 2.200 0 0 1-5.400 0z" />
            </svg>
          </button>
          <button aria-label="Copilot preview" className="relative ml-[22px]">
            <svg viewBox="0 0 30 28" className="h-7 w-[30px]">
              <defs>
                <linearGradient id="cp1" x1="0.600" y1="0" x2="0.100" y2="1">
                  <stop offset="0" stopColor="#1b8ff0" />
                  <stop offset="0.5" stopColor="#38c7a8" />
                  <stop offset="1" stopColor="#f0d020" />
                </linearGradient>
                <linearGradient id="cp2" x1="1" y1="0" x2="0.300" y2="1">
                  <stop offset="0" stopColor="#b05cf5" />
                  <stop offset="0.600" stopColor="#f0518a" />
                  <stop offset="1" stopColor="#ff9a4a" />
                </linearGradient>
              </defs>
              <path d="M8 0h11c2 0 3 4 3.500 7H16c-3 0-3.500 2-4.500 6-.8 3-1.500 5-4 5H3c-3 0-3.500-2-2.500-6L3 4c.8-3 2-4 5-4z" fill="url(#cp1)" />
              <path d="M14 0h5c2 0 3 4 3.500 7H16z" fill="#1652c4" />
              <path d="M16 7h9c3 0 4.500 2 3.500 6l-2 8H11c2 0 2.700-3 3-5z" fill="url(#cp2)" />
            </svg>
            <span className="absolute -right-[1px] bottom-0 rounded-[3px] bg-[#ffc700] px-[3px] text-[8px] font-extrabold leading-[9px] text-black">
              PRE
            </span>
          </button>
        </div>
      </div>
    </footer>
  );
}

export default function App() {
  return (
    <div className="flex h-screen flex-col overflow-hidden bg-[#0e1117] font-['Open_Sans',sans-serif]">
      <div className="shrink-0 bg-[#22272b]">
        <TabStrip />
        <Toolbar />
        <Bookmarks />
      </div>
      <div className="h-[2px] shrink-0 bg-gradient-to-r from-[#ff4b4b] to-[#fffd80]" />
      <div className="flex min-h-0 flex-1">
        <Sidebar />
        <Main />
      </div>
      <Taskbar />
    </div>
  );
}
